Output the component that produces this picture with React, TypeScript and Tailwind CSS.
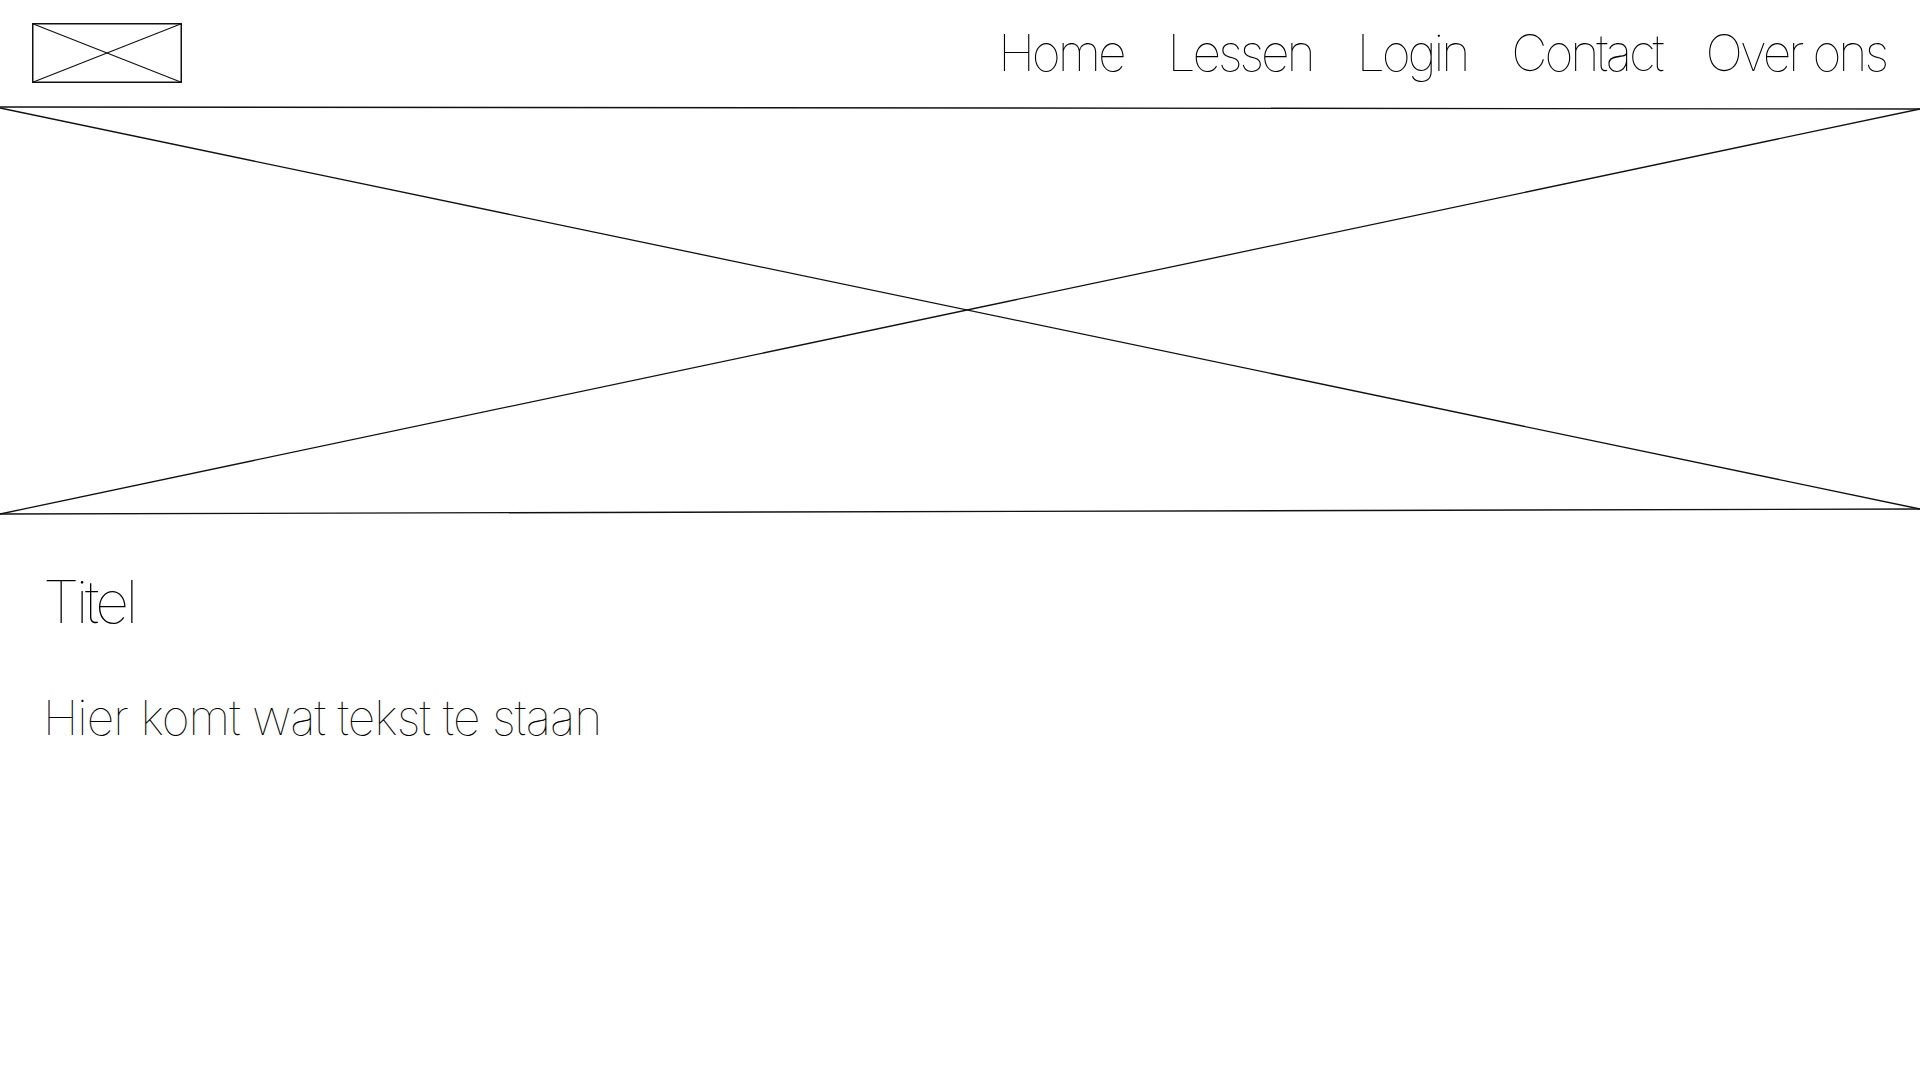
import React from 'react';

const navItems = ['Home', 'Lessen', 'Login', 'Contact', 'Over ons'];

const font = { fontFamily: 'Inter, "Liberation Sans", sans-serif' };

const Placeholder: React.FC<{ className?: string }> = ({ className }) => (
  <svg className={className} viewBox="0 0 150 60" preserveAspectRatio="none">
    <rect x="0.75" y="0.75" width="148.5" height="58.5" fill="none" stroke="#111" strokeWidth="1.5" />
    <line x1="0.75" y1="0.75" x2="149.25" y2="59.25" stroke="#111" strokeWidth="1.2" />
    <line x1="0.75" y1="59.25" x2="149.25" y2="0.75" stroke="#111" strokeWidth="1.2" />
  </svg>
);

// hero image placeholder: slightly skewed box, no side edges
const Hero: React.FC = () => (
  <svg className="block w-full h-[410px]" viewBox="0 0 1920 410" preserveAspectRatio="none">
    <line x1="0" y1="1" x2="1920" y2="3" stroke="#111" strokeWidth="1.4" />
    <line x1="0" y1="408" x2="1920" y2="403" stroke="#111" strokeWidth="1.4" />
    <line x1="0" y1="2" x2="1920" y2="403" stroke="#111" strokeWidth="1.3" />
    <line x1="0" y1="408" x2="1920" y2="3" stroke="#111" strokeWidth="1.3" />
  </svg>
);

export default function App() {
  return (
    <div className="min-h-screen bg-white text-black" style={font}>
      <header className="h-[106px] flex items-center justify-between pl-8 pr-[34px]">
        <Placeholder className="w-[150px] h-[60px]" />
        <nav className="flex items-center gap-[44px]">
          {navItems.map((item) => (
            <a key={item} href="#" className="text-[50px] font-thin leading-none tracking-[-0.062em]">
              {item}
            </a>
          ))}
        </nav>
      </header>

      <Hero />

      <main className="px-[43px] pt-[56px]">
        <h1 className="text-[59px] font-thin leading-none tracking-[-0.06em]">Titel</h1>
        <p className="mt-[63px] text-[48px] font-thin leading-none tracking-[-0.02em]">
          Hier komt wat tekst te staan
        </p>
      </main>
    </div>
  );
}
